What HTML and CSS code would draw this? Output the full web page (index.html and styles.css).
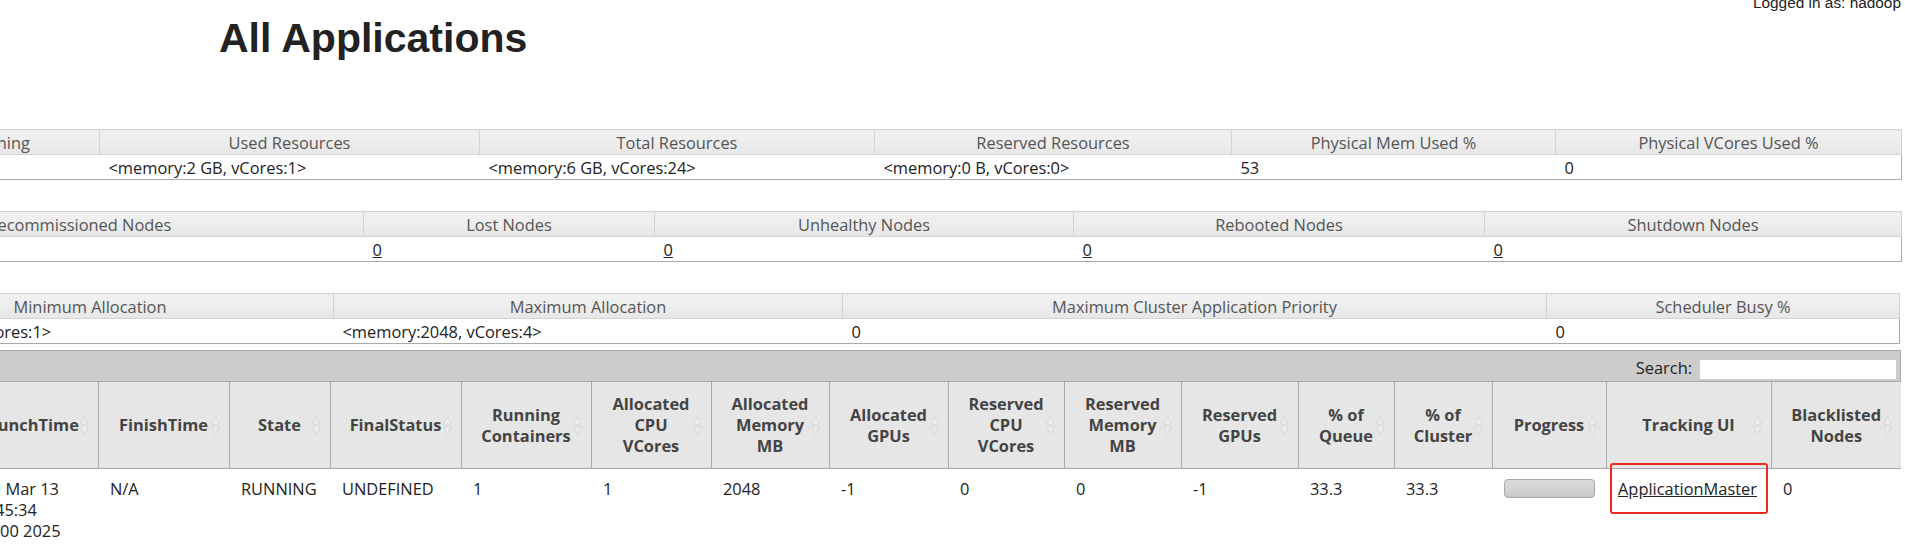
FILE: index.html
```html
<!DOCTYPE html>
<html>
<head>
<meta charset="utf-8">
<title>All Applications</title>
<link rel="stylesheet" href="styles.css">
</head>
<body>
<div class="header">
  <div class="login">Logged in as: hadoop</div>
  <h1>All Applications</h1>
</div>
<div class="content">
  <table class="metrics m1">
    <colgroup><col style="width:290px"><col style="width:380px"><col style="width:395px"><col style="width:357px"><col style="width:324px"><col style="width:346px"></colgroup>
    <thead><tr><th>Containers Running</th><th>Used Resources</th><th>Total Resources</th><th>Reserved Resources</th><th>Physical Mem Used %</th><th>Physical VCores Used %</th></tr></thead>
    <tbody><tr><td>1</td><td>&lt;memory:2 GB, vCores:1&gt;</td><td>&lt;memory:6 GB, vCores:24&gt;</td><td>&lt;memory:0 B, vCores:0&gt;</td><td>53</td><td>0</td></tr></tbody>
  </table>
  <table class="metrics m2">
    <colgroup><col style="width:570px"><col style="width:291px"><col style="width:419px"><col style="width:411px"><col style="width:417px"></colgroup>
    <thead><tr><th>Decommissioned Nodes</th><th>Lost Nodes</th><th>Unhealthy Nodes</th><th>Rebooted Nodes</th><th>Shutdown Nodes</th></tr></thead>
    <tbody><tr><td><a href="#">0</a></td><td><a href="#">0</a></td><td><a href="#">0</a></td><td><a href="#">0</a></td><td><a href="#">0</a></td></tr></tbody>
  </table>
  <table class="metrics m3">
    <colgroup><col style="width:487px"><col style="width:509px"><col style="width:704px"><col style="width:353px"></colgroup>
    <thead><tr><th>Minimum Allocation</th><th>Maximum Allocation</th><th>Maximum Cluster Application Priority</th><th>Scheduler Busy %</th></tr></thead>
    <tbody><tr><td class="min-alloc">&lt;memory:1024, vCores:1&gt;</td><td>&lt;memory:2048, vCores:4&gt;</td><td>0</td><td>0</td></tr></tbody>
  </table>

  <div class="apps">
    <div class="toolbar">
      <label class="search">Search: <input type="text"></label>
    </div>
    <table class="apps-table">
      <colgroup>
        <col style="width:138px"><col style="width:131px"><col style="width:101px"><col style="width:131px">
        <col style="width:130px"><col style="width:120px"><col style="width:118px"><col style="width:119px">
        <col style="width:116px"><col style="width:117px"><col style="width:117px"><col style="width:96px">
        <col style="width:98px"><col style="width:114px"><col style="width:165px"><col style="width:130px">
      </colgroup>
      <thead>
        <tr>
          <th>LaunchTime<svg class="sort" viewBox="0 0 9 19"><path d="M4.5 0.6 L8.4 8.2 L0.6 8.2 Z M0.6 10.8 L8.4 10.8 L4.5 18.4 Z"/></svg></th>
          <th>FinishTime<svg class="sort" viewBox="0 0 9 19"><path d="M4.5 0.6 L8.4 8.2 L0.6 8.2 Z M0.6 10.8 L8.4 10.8 L4.5 18.4 Z"/></svg></th>
          <th>State<svg class="sort" viewBox="0 0 9 19"><path d="M4.5 0.6 L8.4 8.2 L0.6 8.2 Z M0.6 10.8 L8.4 10.8 L4.5 18.4 Z"/></svg></th>
          <th>FinalStatus<svg class="sort" viewBox="0 0 9 19"><path d="M4.5 0.6 L8.4 8.2 L0.6 8.2 Z M0.6 10.8 L8.4 10.8 L4.5 18.4 Z"/></svg></th>
          <th>Running Containers<svg class="sort" viewBox="0 0 9 19"><path d="M4.5 0.6 L8.4 8.2 L0.6 8.2 Z M0.6 10.8 L8.4 10.8 L4.5 18.4 Z"/></svg></th>
          <th>Allocated CPU VCores<svg class="sort" viewBox="0 0 9 19"><path d="M4.5 0.6 L8.4 8.2 L0.6 8.2 Z M0.6 10.8 L8.4 10.8 L4.5 18.4 Z"/></svg></th>
          <th>Allocated Memory MB<svg class="sort" viewBox="0 0 9 19"><path d="M4.5 0.6 L8.4 8.2 L0.6 8.2 Z M0.6 10.8 L8.4 10.8 L4.5 18.4 Z"/></svg></th>
          <th>Allocated GPUs<svg class="sort" viewBox="0 0 9 19"><path d="M4.5 0.6 L8.4 8.2 L0.6 8.2 Z M0.6 10.8 L8.4 10.8 L4.5 18.4 Z"/></svg></th>
          <th>Reserved CPU VCores<svg class="sort" viewBox="0 0 9 19"><path d="M4.5 0.6 L8.4 8.2 L0.6 8.2 Z M0.6 10.8 L8.4 10.8 L4.5 18.4 Z"/></svg></th>
          <th>Reserved Memory MB<svg class="sort" viewBox="0 0 9 19"><path d="M4.5 0.6 L8.4 8.2 L0.6 8.2 Z M0.6 10.8 L8.4 10.8 L4.5 18.4 Z"/></svg></th>
          <th>Reserved GPUs<svg class="sort" viewBox="0 0 9 19"><path d="M4.5 0.6 L8.4 8.2 L0.6 8.2 Z M0.6 10.8 L8.4 10.8 L4.5 18.4 Z"/></svg></th>
          <th>% of Queue<svg class="sort" viewBox="0 0 9 19"><path d="M4.5 0.6 L8.4 8.2 L0.6 8.2 Z M0.6 10.8 L8.4 10.8 L4.5 18.4 Z"/></svg></th>
          <th>% of Cluster<svg class="sort" viewBox="0 0 9 19"><path d="M4.5 0.6 L8.4 8.2 L0.6 8.2 Z M0.6 10.8 L8.4 10.8 L4.5 18.4 Z"/></svg></th>
          <th>Progress<svg class="sort" viewBox="0 0 9 19"><path d="M4.5 0.6 L8.4 8.2 L0.6 8.2 Z M0.6 10.8 L8.4 10.8 L4.5 18.4 Z"/></svg></th>
          <th>Tracking UI<svg class="sort" viewBox="0 0 9 19"><path d="M4.5 0.6 L8.4 8.2 L0.6 8.2 Z M0.6 10.8 L8.4 10.8 L4.5 18.4 Z"/></svg></th>
          <th>Blacklisted Nodes<svg class="sort" viewBox="0 0 9 19"><path d="M4.5 0.6 L8.4 8.2 L0.6 8.2 Z M0.6 10.8 L8.4 10.8 L4.5 18.4 Z"/></svg></th>
        </tr>
      </thead>
      <tbody>
        <tr>
          <td class="launch">Thu Mar 13 15:45:34 +0800 2025</td>
          <td>N/A</td>
          <td>RUNNING</td>
          <td>UNDEFINED</td>
          <td>1</td>
          <td>1</td>
          <td>2048</td>
          <td>-1</td>
          <td>0</td>
          <td>0</td>
          <td>-1</td>
          <td>33.3</td>
          <td>33.3</td>
          <td><div class="progress"></div></td>
          <td class="tracking"><a href="#">ApplicationMaster</a><span class="mark"></span></td>
          <td>0</td>
        </tr>
      </tbody>
    </table>
  </div>
</div>
</body>
</html>
```

FILE: styles.css
```css
html, body {
  margin: 0;
  padding: 0;
  background: #ffffff;
}

body {
  width: 1905px;
  height: 549px;
  overflow: hidden;
  font-family: "Open Sans", "Noto Sans", sans-serif;
  font-size: 16.4px;
  color: #222222;
}

.header {
  font-family: "Liberation Sans", Arial, sans-serif;
  color: #222222;
}

.login {
  text-align: right;
  font-size: 15.4px;
  line-height: 18px;
  margin-top: -6px;
  padding-right: 4px;
}

.header h1 {
  margin: 2px 0 0 219px;
  font-size: 41px;
  line-height: 48px;
  font-weight: bold;
  color: #222222;
}

.content {
  padding-top: 67px;
}

.metrics {
  border-collapse: collapse;
  table-layout: fixed;
  border: 1px solid #aaaaaa;
  margin-bottom: 31px;
}

.m1 { margin-left: -191px; width: 2092px; }
.m2 { margin-left: -207px; width: 2108px; }
.m3 { margin-left: -154px; width: 2053px; margin-bottom: 6px; }

.metrics th {
  font-weight: normal;
  color: #555555;
  line-height: 22px;
  padding: 2px 9px 0 9px;
  white-space: nowrap;
  overflow: hidden;
  text-align: center;
  background: linear-gradient(#f1f1f1 0%, #ededed 50%, #e7e7e7 100%);
  border: 1px solid #d3d3d3;
}

.metrics td {
  line-height: 22px;
  padding: 2px 9px 0 9px;
  white-space: nowrap;
  overflow: hidden;
  text-align: left;
  color: #222222;
}

.metrics td.min-alloc {
  padding-left: 5px;
}

a {
  color: #222222;
  text-decoration: underline;
}

.apps {
  margin-left: -40px;
  width: 1941px;
}

.toolbar {
  display: flex;
  justify-content: flex-end;
  align-items: center;
  padding: 3px 4px 0 0;
  box-sizing: border-box;
  height: 32px;
  background: #cccccc;
  border: 1px solid #aaaaaa;
  color: #222222;
}

.search {
  display: flex;
  align-items: center;
  gap: 8px;
}

.search input {
  width: 196px;
  height: 19px;
  box-sizing: border-box;
  border: none;
  background: #ffffff;
  margin: 3px 0 0 0;
  padding: 0;
  outline: none;
}

.apps-table {
  border-collapse: collapse;
  table-layout: fixed;
  width: 1941px;
}

.apps-table th {
  position: relative;
  font-weight: bold;
  color: #444444;
  background: #e6e6e6;
  line-height: 21px;
  padding: 11px 18px 12px 18px;
  text-align: center;
  vertical-align: middle;
  border-right: 1px solid #aaaaaa;
  border-bottom: 1px solid #aaaaaa;
}

.apps-table th:last-child {
  border-right: none;
}

.sort {
  position: absolute;
  right: 9px;
  top: calc(50% - 9.5px);
  width: 9px;
  height: 19px;
  fill: #eeeeee;
  stroke: #d2d2d2;
  stroke-width: 0.8;
}

.apps-table td {
  vertical-align: top;
  line-height: 21px;
  padding: 9px 12px 10px 12px;
  text-align: left;
  color: #222222;
}

.apps-table td.launch {
  padding-right: 16px;
}

.progress {
  width: 91px;
  height: 19px;
  box-sizing: border-box;
  margin-top: 1px;
  border: 1px solid #aaaaaa;
  border-radius: 4px;
  background: linear-gradient(#dddddd, #c9c9c9);
}

.tracking {
  position: relative;
}

.mark {
  position: absolute;
  left: 4px;
  top: -6px;
  width: 158px;
  height: 51px;
  box-sizing: border-box;
  border: 2px solid #ec2a22;
  border-radius: 3px;
}
```
